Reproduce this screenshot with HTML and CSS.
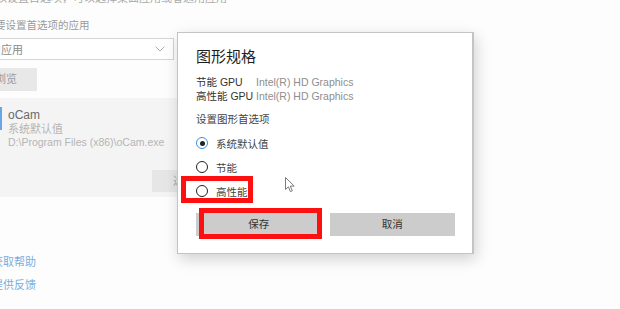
FILE: index.html
```html
<!DOCTYPE html>
<html lang="zh-CN">
<head>
<meta charset="utf-8">
<link rel="stylesheet" href="styles.css">
</head>
<body>
<div class="page">
  <div class="left">
    <div class="top-line">选择一个应用以设置首选项，可以选择桌面应用或者通用应用</div>
    <div class="label">选择要设置首选项的应用</div>
    <div class="select">
      <span>通用应用</span>
      <svg class="chev" width="10" height="6" viewBox="0 0 10 6"><path d="M0.5 0.5 L5 5 L9.5 0.5" fill="none" stroke="#b0b0b0" stroke-width="1"/></svg>
    </div>
    <div class="browse">浏览</div>
    <div class="card">
      <div class="card-item">
        <div class="bar"></div>
        <div class="card-text">
          <div class="app-name">oCam</div>
          <div class="app-sub">系统默认值</div>
          <div class="app-sub path">D:\Program Files (x86)\oCam.exe</div>
        </div>
      </div>
      <div class="card-actions"><div class="card-btn">选项</div></div>
    </div>
    <div class="links">
      <div class="link">获取帮助</div>
      <div class="link">提供反馈</div>
    </div>
  </div>

  <div class="dialog">
    <div class="title">图形规格</div>
    <div class="gpu">
      <span class="k">节能 GPU</span><span class="v">Intel(R) HD Graphics</span>
      <span class="k">高性能 GPU</span><span class="v">Intel(R) HD Graphics</span>
    </div>
    <div class="section">设置图形首选项</div>
    <div class="radios">
      <div class="radio"><span class="dot on"></span><span>系统默认值</span></div>
      <div class="radio"><span class="dot"></span><span>节能</span></div>
      <div class="radio"><span class="dot"></span><span>高性能</span></div>
    </div>
    <div class="buttons">
      <div class="btn">保存</div>
      <div class="btn">取消</div>
    </div>
  </div>

  <div class="mark mark-radio"></div>
  <div class="mark mark-save"></div>

  <svg class="cursor" width="11" height="16" viewBox="0 0 11 16"><path d="M0.5 0.5 L0.5 12.5 L3.4 9.8 L5.4 14.6 L7.3 13.8 L5.3 9.1 L9.2 9.1 Z" fill="#fff" stroke="#7a7a7a" stroke-width="1" stroke-linejoin="round"/></svg>
</div>
</body>
</html>
```

FILE: styles.css
```css
* { box-sizing: border-box; }
html, body { margin: 0; padding: 0; background: #fdfdfd; }
body {
  font-family: "Liberation Sans", "Noto Sans CJK SC", sans-serif;
  width: 620px;
  height: 309px;
  overflow: hidden;
}
.page { position: relative; width: 620px; height: 309px; overflow: hidden; }

.left {
  display: flex;
  flex-direction: column;
  width: 200px;
  margin-left: -10px;
}
.top-line {
  margin-top: -9px;
  font-size: 11px;
  line-height: 14px;
  color: #a8a8a8;
  white-space: nowrap;
  margin-left: -60px;
}
.label {
  margin-top: 13px;
  font-size: 10.5px;
  line-height: 14px;
  color: #9a9a9a;
  white-space: nowrap;
  margin-left: -16px;
}
.select {
  margin-top: 6px;
  width: 184px;
  height: 22px;
  border: 1px solid #d4d4d4;
  background: #fff;
  display: flex;
  align-items: center;
  justify-content: space-between;
  padding: 0 8px 0 0;
  font-size: 11px;
  color: #8a8a8a;
}
.select span { margin-left: -12px; }
.chev { display: block; }
.browse {
  margin-top: 8px;
  width: 47px;
  height: 23px;
  background: #e8e8e8;
  font-size: 11px;
  line-height: 23px;
  color: #9a9a9a;
  text-indent: 5px;
}
.card {
  margin-top: 7px;
  margin-left: 10px;
  width: 190px;
  height: 99px;
  background: #f4f4f4;
  display: flex;
  flex-direction: column;
  justify-content: space-between;
  padding: 9px 0 5px 0;
}
.card-item { display: flex; gap: 6px; }
.bar { width: 2px; height: 23px; background: #6aa6e3; flex: none; }
.card-text { display: flex; flex-direction: column; }
.app-name { font-size: 12px; line-height: 16px; color: #6a6a6a; }
.app-sub { font-size: 11px; line-height: 13px; color: #b4b4b4; white-space: nowrap; }
.app-sub.path { font-size: 10.5px; }
.card-actions { display: flex; padding-left: 152px; }
.card-btn {
  width: 64px;
  flex: none;
  height: 22px;
  background: #e6e6e6;
  font-size: 11px;
  line-height: 22px;
  color: #aaa;
  text-align: center;
}
.links {
  margin-top: 58px;
  margin-left: 10px;
  display: flex;
  flex-direction: column;
  gap: 9px;
}
.link {
  font-size: 11px;
  line-height: 14px;
  color: #78aee0;
  margin-left: -8px;
}

.dialog {
  position: absolute;
  left: 177px;
  top: 32px;
  width: 297px;
  background: #fff;
  border: 1px solid #c4c4c4;
  border-right-width: 2px;
  box-shadow: 2px 5px 14px rgba(0,0,0,0.18);
  padding: 14px 17px 17px 18px;
  display: flex;
  flex-direction: column;
  color: #222;
}
.title { font-size: 15px; line-height: 20px; color: #1e1e1e; }
.gpu {
  margin-top: 8px;
  display: grid;
  grid-template-columns: 60px auto;
  font-size: 10.5px;
  line-height: 14px;
}
.gpu .k { color: #333; white-space: nowrap; }
.gpu .v { color: #8e8e8e; }
.section { margin-top: 9px; font-size: 10.5px; line-height: 14px; color: #444; }
.radios { margin-top: 5px; display: flex; flex-direction: column; }
.radio {
  height: 24px;
  display: flex;
  align-items: center;
  gap: 8px;
  font-size: 10.5px;
  color: #444;
}
.dot {
  width: 12px;
  height: 12px;
  border-radius: 50%;
  border: 1.5px solid #222;
  flex: none;
  display: flex;
  align-items: center;
  justify-content: center;
}
.dot.on { border-color: #3b8ee0; }
.dot.on::after {
  content: "";
  width: 5px;
  height: 5px;
  border-radius: 50%;
  background: #222;
}
.buttons {
  margin-top: 10px;
  display: grid;
  grid-template-columns: 1fr 1fr;
  gap: 8px;
}
.btn {
  height: 23px;
  background: #cccccc;
  font-size: 10.5px;
  line-height: 23px;
  text-align: center;
  color: #333;
}

.mark {
  position: absolute;
  border: 5px solid #ff1010;
}
.mark-radio { left: 181px; top: 176px; width: 72px; height: 27px; }
.mark-save { left: 199px; top: 208px; width: 123px; height: 31px; }

.cursor { position: absolute; left: 285px; top: 177px; }
```
